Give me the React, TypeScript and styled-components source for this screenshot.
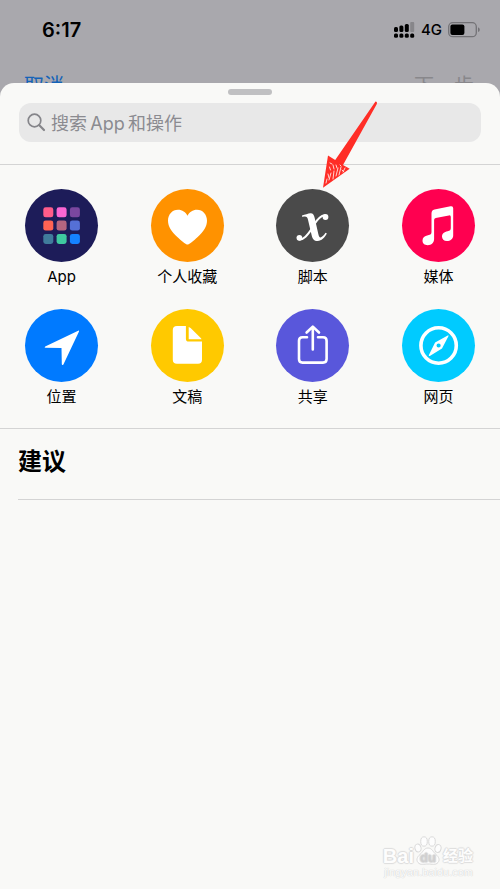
import React from "react";
import styled, { createGlobalStyle } from "styled-components";

const GlobalStyle = createGlobalStyle`
  * { box-sizing: border-box; }
  html { background: #f9f9f7; }
  body {
    margin: 0;
    font-family: Inter, "Noto Sans CJK SC", sans-serif;
    color: #000;
  }
  button { font: inherit; color: inherit; background: none; border: 0; padding: 0; }
`;

const Screen = styled.div`
  display: flex;
  flex-direction: column;
  min-height: 100vh;
  background: #a9a8ad;
`;

const StatusBar = styled.header`
  display: flex;
  align-items: center;
  justify-content: space-between;
  height: 60px;
  padding: 0 20px 0 42px;
`;

const Clock = styled.time`
  font-size: 20px;
  line-height: 24px;
  font-weight: 600;
`;

const StatusIcons = styled.div`
  display: flex;
  align-items: center;
  gap: 6px;
  font-size: 15px;
  line-height: 20px;
  font-weight: 500;
`;

const NavBar = styled.nav`
  display: flex;
  justify-content: space-between;
  align-items: center;
  height: 52px;
  padding: 0 26px 0 24px;
`;

const NavButton = styled.button<{ $tone: string }>`
  && {
    color: ${(p) => p.$tone};
    font-size: 20px;
    line-height: 24px;
  }
`;

const Sheet = styled.main`
  position: relative;
  flex: 1;
  display: flex;
  flex-direction: column;
  margin-top: -29px;
  background: #f9f9f7;
  border-radius: 14px 14px 0 0;
`;

const Grabber = styled.div`
  align-self: center;
  width: 44px;
  height: 6px;
  margin-top: 6px;
  border-radius: 3px;
  background: #c0c0c2;
`;

const SearchArea = styled.div`
  padding: 8px 19px 22px;
  border-bottom: 1px solid #d4d4d4;
`;

const SearchField = styled.label`
  display: flex;
  align-items: center;
  gap: 5px;
  height: 39px;
  padding: 0 8px;
  border-radius: 12px;
  background: #e8e8e8;
`;

const SearchInput = styled.input`
  flex: 1;
  min-width: 0;
  height: 39px;
  padding: 2px 0 0;
  border: 0;
  outline: 0;
  background: transparent;
  font: inherit;
  font-size: 18px;
  &::placeholder { color: #8b8b90; opacity: 1; }
`;

const Categories = styled.section`
  display: grid;
  grid-template-columns: repeat(4, 73px);
  justify-content: space-between;
  row-gap: 22px;
  padding: 24px 25px 21px;
  border-bottom: 1px solid #d4d4d4;
`;

const Category = styled.button`
  display: flex;
  flex-direction: column;
  align-items: center;
  gap: 4px;
`;

const Disc = styled.span<{ $fill: string }>`
  display: flex;
  width: 73px;
  height: 73px;
  border-radius: 50%;
  background: ${(p) => p.$fill};
`;

const CategoryLabel = styled.span`
  font-size: 15px;
  line-height: 21px;
  white-space: nowrap;
`;

const Suggestions = styled.section`
  margin-left: 18px;
  padding: 17px 0 22px;
  border-bottom: 1px solid #d4d4d4;
`;

const Heading = styled.h2`
  margin: 0;
  font-size: 24px;
  line-height: 31px;
  font-weight: 700;
`;

const Watermark = styled.footer`
  display: flex;
  flex-direction: column;
  align-items: flex-end;
  margin-top: auto;
  padding: 0 27px 11px 0;
  color: #fdfdfd;
  font-family: "Liberation Sans", "Noto Sans CJK SC", sans-serif;
  text-shadow: 1px 0 1px #dcdcdc, -1px 0 1px #dcdcdc, 0 1px 1px #dcdcdc, 0 -1px 1px #dcdcdc;
`;

const Brand = styled.div`
  display: flex;
  align-items: flex-end;
  font-size: 20px;
  line-height: 20px;
  font-weight: 700;
`;

const BrandSuffix = styled.span`
  font-size: 15px;
  margin-left: 1px;
`;

const Site = styled.div`
  font-size: 11px;
  line-height: 12px;
  text-shadow: 0 0 1px #c8c8c8, 0 0 1px #dcdcdc;
`;

const ArrowOverlay = styled.svg`
  position: absolute;
  left: calc(50% + 70px);
  top: 17px;
  pointer-events: none;
`;

const art: Record<string, React.ReactNode> = {
  App: (
    <>
      {["#ff5c8a", "#fb66d3", "#7b479f", "#ff6354", "#b5657f", "#5570d6", "#407c9c", "#3fc9a0", "#1582ff"].map(
        (c, i) => (
          <rect key={c} x={18.3 + (i % 3) * 13.3} y={18.3 + Math.floor(i / 3) * 13.3} width="10" height="10" rx="2.4" fill={c} />
        )
      )}
    </>
  ),
  heart: (
    <path
      fill="#fff"
      d="M36.500 55.600C35.300 55.600 30 51.600 26.300 48C20.500 42.600 17 37.400 17 31.700C17 25.500 21.200 20.700 27 20.700C31.300 20.700 34.700 23 36.500 26.800C38.300 23 41.700 20.700 46 20.700C51.800 20.700 56 25.500 56 31.700C56 37.400 52.500 42.600 46.700 48C43 51.600 37.700 55.600 36.500 55.600Z"
    />
  ),
  script: (
    <g fill="none" stroke="#fff" strokeLinecap="round">
      <path fill="#fff" stroke="none" d="M26 26.500C29 25.500 32 24.500 34.500 24.200C37 24.100 38 26 38.700 29L42.200 44.500C42.800 47.300 43.500 48.500 44.600 48.400C46.300 48.200 48 46.100 49.500 43.800L50.900 44.600C48.500 49 45.600 52 41.600 52C38 52 36.500 50 35.700 46.500L32 30.700C31.500 28.400 30.500 27.300 28.700 27.400L26 27.800Z" />
      <path strokeWidth="2" d="M37.900 35.700C41.500 30 44.500 26.500 48.500 26.200M35.400 40.300C31 46.500 28 50.400 23.500 50.600" />
      <circle cx="49.500" cy="28" r="2.900" fill="#fff" stroke="none" />
      <circle cx="23.400" cy="48.800" r="2.900" fill="#fff" stroke="none" />
    </g>
  ),
  music: (
    <path fill="#fff" d="M29.500 24.500Q29.500 21.300 32.500 20.600L48.500 17.300Q51.200 16.800 51.200 19.300V46.500C51.200 50 48.400 52 44.800 52C41.900 52 40 50.100 40 47.500C40 44.400 42.200 42.900 45.600 42.200C48 41.700 48.800 41 48.800 39V27.900Q48.800 26 46.900 26.400L33.700 29.100Q32.100 29.400 32.100 31V50C32.100 53.700 29.500 56.200 25.700 56.200C22.500 56.200 20.500 54.300 20.500 51.500C20.500 48.600 22.600 46.800 26 46.200C28.700 45.700 29.500 45.200 29.500 43Z" />
  ),
  location: <path fill="#fff" d="M53.700 21.600Q54.300 21.800 54 22.500L38.400 55.500Q37.300 56.700 36.800 55.200L36.500 39.100L20.300 38.700Q18.900 38.200 20.200 37.500Z" />,
  document: (
    <>
      <path fill="#fff" d="M26 17H34.900V29.700Q34.900 32.600 37.800 32.600H51V50.800Q51 54.800 47 54.800H26Q21.800 54.800 21.800 50.800V21Q21.800 17 26 17Z" />
      <path fill="#fff" d="M37.700 17.900Q38.800 18.300 39.600 19.100L49.500 28.800Q50.300 29.600 50.500 30.300H37.700Z" />
    </>
  ),
  share: (
    <path fill="none" stroke="#fff" strokeWidth="2.600" strokeLinecap="round" strokeLinejoin="round" d="M31 28.200H26.500Q23 28.200 23 31.700V50Q23 53.600 26.500 53.600H47Q50.600 53.600 50.600 50V31.700Q50.600 28.200 47 28.200H42M36.800 40.500V18M30.600 23.500L36.800 17.600L43 23.500" />
  ),
  compass: (
    <>
      <circle cx="36.600" cy="36.500" r="17.700" fill="none" stroke="#fff" strokeWidth="3.600" />
      <path fill="#fff" fillRule="evenodd" d="M46.200 26.300Q46.800 26.600 46.400 27.300L40 39.600L27.800 47Q26.500 47.300 26.900 46.100L33.100 33.600ZM36.600 34.400A2.100 2.100 0 1 0 36.600 38.600A2.100 2.100 0 1 0 36.600 34.400Z" />
    </>
  ),
};

const categories = [
  { label: "App", fill: "#1d1c59", icon: "App" },
  { label: "个人收藏", fill: "#ff9200", icon: "heart" },
  { label: "脚本", fill: "#4a4a4a", icon: "script" },
  { label: "媒体", fill: "#ff0050", icon: "music" },
  { label: "位置", fill: "#007aff", icon: "location" },
  { label: "文稿", fill: "#ffc900", icon: "document" },
  { label: "共享", fill: "#5957db", icon: "share" },
  { label: "网页", fill: "#00cbff", icon: "compass" },
];

export default function App() {
  return (
    <>
      <GlobalStyle />
      <Screen>
        <StatusBar>
          <Clock>6:17</Clock>
          <StatusIcons>
            <svg width="21" height="16" viewBox="0 0 21 16" aria-hidden="true">
              <rect x="0" y="5" width="4" height="5" rx="1.500" />
              <rect x="5.400" y="3.500" width="4" height="6.500" rx="1.500" />
              <rect x="10.800" y="2" width="4" height="8" rx="1.500" />
              <rect x="16.200" y="0" width="4" height="10" rx="1" fill="#87868a" />
              {[0, 5.4, 10.8, 16.2].map((x) => (
                <rect key={x} x={x} y="11.500" width="4" height="4.300" rx="1.500" />
              ))}
            </svg>
            <span>4G</span>
            <svg width="32" height="16" viewBox="0 0 32 16" aria-hidden="true">
              <rect x=".700" y=".700" width="27.600" height="14" rx="4" fill="none" stroke="#737276" strokeWidth="1.300" />
              <rect x="2.400" y="2.500" width="14" height="10.500" rx="2" />
              <path d="M30 5.300Q31.800 6 31.800 7.700T30 10Z" fill="#737276" />
            </svg>
          </StatusIcons>
        </StatusBar>
        <NavBar>
          <NavButton type="button" $tone="#1463b8">取消</NavButton>
          <NavButton type="button" $tone="#88878b">下一步</NavButton>
        </NavBar>

        <Sheet>
          <Grabber />
          <SearchArea>
            <SearchField>
              <svg width="19" height="19" viewBox="0 0 19 19" fill="none" stroke="#85858a" strokeLinecap="round" aria-hidden="true">
                <circle cx="7.500" cy="7.500" r="6.300" strokeWidth="1.700" />
                <path d="M12.300 12.300L17 17" strokeWidth="2.200" />
              </svg>
              <SearchInput type="text" aria-label="搜索" placeholder={"搜索\u2009App\u2009和操作"} />
            </SearchField>
          </SearchArea>

          <Categories>
            {categories.map((c) => (
              <Category key={c.label} type="button">
                <Disc $fill={c.fill}>
                  <svg width="73" height="73" viewBox="0 0 73 73" aria-hidden="true">
                    {art[c.icon]}
                  </svg>
                </Disc>
                <CategoryLabel>{c.label}</CategoryLabel>
              </Category>
            ))}
          </Categories>

          <Suggestions>
            <Heading>建议</Heading>
          </Suggestions>

          <Watermark>
            <Brand>
              <span>Bai</span>
              <svg width="28" height="30" viewBox="0 0 28 30" aria-hidden="true">
                <g fill="#fdfdfd" stroke="#dadada" strokeWidth="1">
                  <ellipse cx="4" cy="12" rx="3" ry="4" transform="rotate(-15 4 12)" />
                  <ellipse cx="10" cy="5.500" rx="3.300" ry="4.700" />
                  <ellipse cx="18" cy="5.500" rx="3.300" ry="4.700" />
                  <ellipse cx="24" cy="12.500" rx="3" ry="4" transform="rotate(15 24 12.500)" />
                  <path d="M14 12C18 12 19 16 22 18.500C25 21 26 24 24 26.500C21.500 29.500 18 28 14 28S6.500 29.500 4 26.500C2 24 3 21 6 18.500C9 16 10 12 14 12Z" />
                </g>
                <text x="14" y="26" textAnchor="middle" fontSize="13" fontWeight="700" fill="#d0d0d0">du</text>
              </svg>
              <BrandSuffix>经验</BrandSuffix>
            </Brand>
            <Site>jingyan.baidu.com</Site>
          </Watermark>

          <ArrowOverlay width="60" height="92" viewBox="0 0 60 92" aria-hidden="true">
            <path d="M55.500 1.500Q57.500 1.500 56.800 4L23 65L29.700 68.800L3 87.700L8 55.500L15.200 60Z" fill="#ff2d26" />
            <path
              d="M10 63l2 1M9.500 67l1 3M13 65l1 4M8 74l1 4M11 73l-2 7M14 71l-1 8M16 65l1 3M18 68l-2 8M21 67l-2 8M22 70l2 2M25 68l-2 4M7 79l-1 4M20 65l1 1"
              fill="none"
              stroke="#ffd4d0"
              strokeWidth="1"
              strokeLinecap="round"
            />
          </ArrowOverlay>
        </Sheet>
      </Screen>
    </>
  );
}
